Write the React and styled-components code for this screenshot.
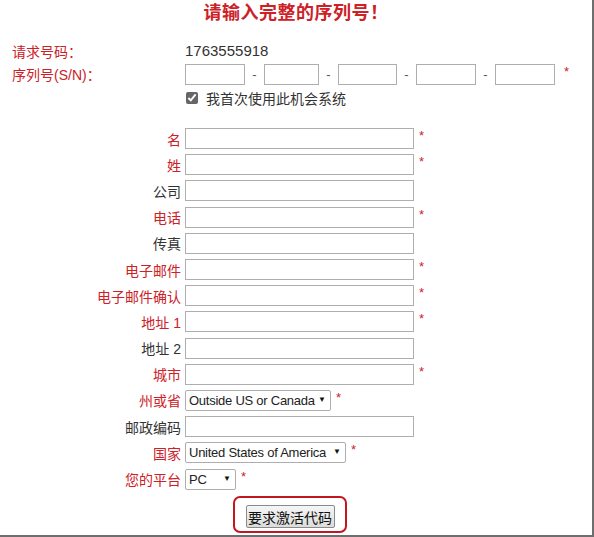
import React from 'react';
import styled, { createGlobalStyle } from 'styled-components';

const RED = '#cc2127';

const GlobalStyle = createGlobalStyle`
  html, body {
    margin: 0;
    padding: 0;
    background: #fff;
  }
  body {
    font-family: "Liberation Sans", "Noto Sans CJK SC", sans-serif;
    font-size: 14px;
    color: #333;
  }
`;

const Frame = styled.div`
  box-sizing: border-box;
  width: 594px;
  height: 537px;
  border-right: 2px solid #6e6e6e;
  border-bottom: 2px solid #6e6e6e;
  background: #fff;
  display: flex;
  flex-direction: column;
`;

const Title = styled.h1`
  margin: 0;
  height: 27px;
  line-height: 26px;
  text-align: center;
  font-size: 18px;
  font-weight: bold;
  color: ${RED};
  letter-spacing: 0.5px;
`;

const TopGrid = styled.div`
  margin-top: 12px;
  display: grid;
  grid-template-columns: 185px 1fr;
  grid-auto-rows: 23.5px;
  align-items: center;
`;

const TopLabel = styled.div`
  padding-left: 12px;
  color: ${RED};
  font-size: 14px;
`;

const Value = styled.div`
  font-size: 15px;
  color: #333;
`;

const SerialRow = styled.div`
  display: flex;
  align-items: center;
`;

const SerialInput = styled.input`
  box-sizing: border-box;
  width: ${({ w }) => w}px;
  height: 21px;
  border: 1px solid #aeaeae;
  margin: 0;
  padding: 0 2px;
`;

const Dash = styled.span`
  width: 19px;
  text-align: center;
  color: #555;
  font-size: 13px;
`;

const Star = styled.span`
  color: ${RED};
  font-size: 13px;
  margin-left: ${({ gap }) => gap || 5}px;
  position: relative;
  top: -3px;
`;

const CheckRow = styled.label`
  display: flex;
  align-items: center;
  gap: 8px;
  padding-left: 1px;
  font-size: 14px;
  color: #333;
`;

const Check = styled.input`
  margin: 0;
  width: 12px;
  height: 12px;
  accent-color: #666;
`;

const FormGrid = styled.div`
  margin-top: 16px;
  display: grid;
  grid-template-columns: 181px 1fr;
  column-gap: 4px;
  grid-auto-rows: 26.2px;
  align-items: center;
`;

const Label = styled.div`
  text-align: right;
  font-size: 14px;
  color: ${({ req }) => (req ? RED : '#333')};
  white-space: nowrap;
`;

const Field = styled.div`
  display: flex;
  align-items: center;
`;

const TextInput = styled.input`
  box-sizing: border-box;
  width: 229px;
  height: 21px;
  margin: 0;
  border: 1px solid #aeaeae;
  padding: 0 2px;
`;

const SelectWrap = styled.div`
  position: relative;
  width: ${({ w }) => w}px;
  height: 21px;
`;

const Select = styled.select`
  box-sizing: border-box;
  width: 100%;
  height: 100%;
  margin: 0;
  padding: 0 12px 0 3px;
  appearance: none;
  border: 1px solid #aeaeae;
  border-radius: 2px;
  background: #fff;
  font-family: "Liberation Sans", "Noto Sans CJK SC", sans-serif;
  font-size: 13px;
  letter-spacing: -0.25px;
  color: #222;
`;

const Arrow = styled.span`
  position: absolute;
  right: 5px;
  top: 5px;
  font-size: 8px;
  color: #111;
  pointer-events: none;
`;

const ButtonArea = styled.div`
  display: flex;
  padding-left: 233px;
  margin-top: 4px;
`;

const Highlight = styled.div`
  box-sizing: border-box;
  width: 114px;
  height: 37px;
  border: 2px solid #c4161f;
  border-radius: 7px;
  display: flex;
  align-items: flex-end;
  justify-content: center;
  padding-bottom: 3px;
`;

const SubmitButton = styled.button`
  box-sizing: border-box;
  width: 89px;
  height: 23px;
  margin: 0;
  padding: 0;
  border: 1px solid #8a8a8a;
  border-radius: 2px;
  background: linear-gradient(#f6f6f6, #dcdcdc);
  font-family: "Liberation Sans", "Noto Sans CJK SC", sans-serif;
  font-size: 14px;
  color: #111;
`;

const fields = [
  { label: '名', req: true },
  { label: '姓', req: true },
  { label: '公司' },
  { label: '电话', req: true },
  { label: '传真' },
  { label: '电子邮件', req: true },
  { label: '电子邮件确认', req: true },
  { label: '地址 1', req: true },
  { label: '地址 2' },
  { label: '城市', req: true },
  { label: '州或省', req: true, select: ['Outside US or Canada'], w: 146 },
  { label: '邮政编码' },
  { label: '国家', req: true, select: ['United States of America'], w: 161 },
  { label: '您的平台', req: true, select: ['PC', 'Mac'], w: 51 },
];

const serialWidths = [60, 55, 59, 60, 60];

export default function App() {
  return (
    <>
      <GlobalStyle />
      <Frame>
        <Title>请输入完整的序列号！</Title>
        <TopGrid>
          <TopLabel>请求号码：</TopLabel>
          <Value>1763555918</Value>
          <TopLabel>序列号(S/N)：</TopLabel>
          <SerialRow>
            {serialWidths.map((w, i) => (
              <React.Fragment key={i}>
                {i > 0 && <Dash>-</Dash>}
                <SerialInput w={w} />
              </React.Fragment>
            ))}
            <Star gap={9}>*</Star>
          </SerialRow>
          <div />
          <CheckRow>
            <Check type="checkbox" defaultChecked />
            我首次使用此机会系统
          </CheckRow>
        </TopGrid>
        <FormGrid>
          {fields.map((f) => (
            <React.Fragment key={f.label}>
              <Label req={f.req}>{f.label}</Label>
              <Field>
                {f.select ? (
                  <SelectWrap w={f.w}>
                    <Select defaultValue={f.select[0]}>
                      {f.select.map((o) => (
                        <option key={o}>{o}</option>
                      ))}
                    </Select>
                    <Arrow>▼</Arrow>
                  </SelectWrap>
                ) : (
                  <TextInput />
                )}
                {f.req && <Star>*</Star>}
              </Field>
            </React.Fragment>
          ))}
        </FormGrid>
        <ButtonArea>
          <Highlight>
            <SubmitButton type="button">要求激活代码</SubmitButton>
          </Highlight>
        </ButtonArea>
      </Frame>
    </>
  );
}
